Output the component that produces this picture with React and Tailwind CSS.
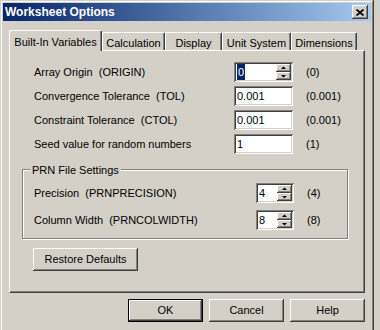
import React from 'react';

const raised =
  'bg-[#d4d0c8] shadow-[inset_-1px_-1px_#404040,inset_1px_1px_#fff,inset_-2px_-2px_#808080,inset_2px_2px_#d4d0c8]';
const sunken =
  'bg-white shadow-[inset_1px_1px_#808080,inset_-1px_-1px_#fff,inset_2px_2px_#404040,inset_-2px_-2px_#d4d0c8]';

const Arrow = ({ up }) => (
  <svg width="7" height="4" viewBox="0 0 7 4">
    <path d={up ? 'M3.5 0.5 L6 3 L1 3 Z' : 'M1 1 L6 1 L3.5 3.5 Z'} fill="#000" />
  </svg>
);

const SpinInput = ({ value, width, selected }) => (
  <div className={`${sunken} h-[20px] flex items-center pl-[3px] pr-[2px] ${width}`}>
    <span className="flex-1 leading-none">
      {selected ? (
        <span className="bg-[#0a246a] text-white px-[1px] py-[2px]">{value}</span>
      ) : (
        value
      )}
    </span>
    <div className="flex flex-col">
      <div className={`${raised} w-[15px] h-[8px] flex items-center justify-center`}>
        <Arrow up />
      </div>
      <div className={`${raised} w-[15px] h-[8px] flex items-center justify-center`}>
        <Arrow />
      </div>
    </div>
  </div>
);

const TextInput = ({ value }) => (
  <div className={`${sunken} h-[20px] w-[59px] flex items-center pl-[3px]`}>{value}</div>
);

const Row = ({ label, labelWidth, children, def }) => (
  <div className="h-[24px] flex items-center">
    <span className={labelWidth}>{label}</span>
    {children}
    <span className="ml-[13px]">{def}</span>
  </div>
);

const Tab = ({ label, width, active }) =>
  active ? (
    <div
      className={`${width} h-[21px] -mb-px relative z-10 bg-[#d4d0c8] border-l border-t border-white rounded-tl-[2px] shadow-[inset_-1px_0_#808080] border-r border-r-[#404040] rounded-tr-[2px] flex items-start justify-center pt-[3px]`}
    >
      {label}
    </div>
  ) : (
    <div
      className={`${width} h-[18px] border-l border-t border-white rounded-tl-[2px] shadow-[inset_-1px_0_#808080] border-r border-r-[#404040] rounded-tr-[2px] flex items-start justify-center pt-[2px]`}
    >
      {label}
    </div>
  );

const Button = ({ label, width, isDefault }) => (
  <div
    className={`${width} h-[23px] flex items-center justify-center ${
      isDefault
        ? 'bg-[#d4d0c8] border border-black shadow-[inset_-1px_-1px_#404040,inset_1px_1px_#fff,inset_-2px_-2px_#808080]'
        : raised
    }`}
  >
    {label}
  </div>
);

export default function App() {
  return (
    <div className="w-[380px] h-[330px] bg-[#d4d0c8] overflow-hidden text-[11px] text-black font-['Liberation_Sans',Arial,sans-serif]">
      <div className="w-[374px] h-[340px] p-[3px] flex flex-col shadow-[inset_-1px_-1px_#404040,inset_1px_1px_#d4d0c8,inset_-2px_-2px_#808080,inset_2px_2px_#fff]">
        {/* title bar */}
        <div className="h-[18px] flex items-center justify-between pl-[2px] pr-[3px] bg-gradient-to-r from-[#0a246a] to-[#a6caf0]">
          <span className="text-white font-bold text-[12px]">Worksheet Options</span>
          <div className={`${raised} w-[16px] h-[14px] flex items-center justify-center`}>
            <svg width="8" height="7" viewBox="0 0 8 7">
              <path d="M0.5 0.5 L7.5 6.5 M7.5 0.5 L0.5 6.5" stroke="#000" strokeWidth="1.8" />
            </svg>
          </div>
        </div>

        <div className="px-[6px] pt-[9px] flex flex-col">
          {/* tabs */}
          <div className="flex items-end h-[20px]">
            <Tab label="Built-In Variables" width="w-[93px]" active />
            <Tab label="Calculation" width="w-[63px]" />
            <Tab label="Display" width="w-[57px]" />
            <Tab label="Unit System" width="w-[69px]" />
            <Tab label="Dimensions" width="w-[66px]" />
          </div>

          {/* panel */}
          <div className="w-[356px] h-[243px] border border-t-white border-l-white border-r-[#404040] border-b-[#404040] shadow-[inset_-1px_-1px_#808080] flex flex-col pt-[9px]">
            <div className="pl-[24px] flex flex-col">
              <Row label="Array Origin  (ORIGIN)" labelWidth="w-[200px] whitespace-pre" def="(0)">
                <SpinInput value="0" width="w-[59px]" selected />
              </Row>
              <Row label="Convergence Tolerance  (TOL)" labelWidth="w-[200px] whitespace-pre" def="(0.001)">
                <TextInput value="0.001" />
              </Row>
              <Row label="Constraint Tolerance  (CTOL)" labelWidth="w-[200px] whitespace-pre" def="(0.001)">
                <TextInput value="0.001" />
              </Row>
              <Row label="Seed value for random numbers" labelWidth="w-[200px]" def="(1)">
                <TextInput value="1" />
              </Row>
            </div>

            {/* group box */}
            <div className="relative ml-[12px] mt-[13px] w-[326px] h-[70px] border border-[#808080] shadow-[inset_1px_1px_#fff,1px_1px_#fff] pl-[11px] pt-[11px] flex flex-col gap-[3px]">
              <span className="absolute left-[7px] -top-[8px] bg-[#d4d0c8] px-[2px]">PRN File Settings</span>
              <Row label="Precision  (PRNPRECISION)" labelWidth="w-[222px] whitespace-pre" def="(4)">
                <SpinInput value="4" width="w-[38px]" />
              </Row>
              <Row label="Column Width  (PRNCOLWIDTH)" labelWidth="w-[222px] whitespace-pre" def="(8)">
                <SpinInput value="8" width="w-[38px]" />
              </Row>
            </div>

            <div className="ml-[23px] mt-[9px]">
              <Button label="Restore Defaults" width="w-[105px]" />
            </div>
          </div>

          {/* dialog buttons */}
          <div className="flex justify-end gap-[6px] mt-[6px] w-[356px]">
            <Button label="OK" width="w-[75px]" isDefault />
            <Button label="Cancel" width="w-[75px]" />
            <Button label="Help" width="w-[75px]" />
          </div>
        </div>
      </div>
    </div>
  );
}
